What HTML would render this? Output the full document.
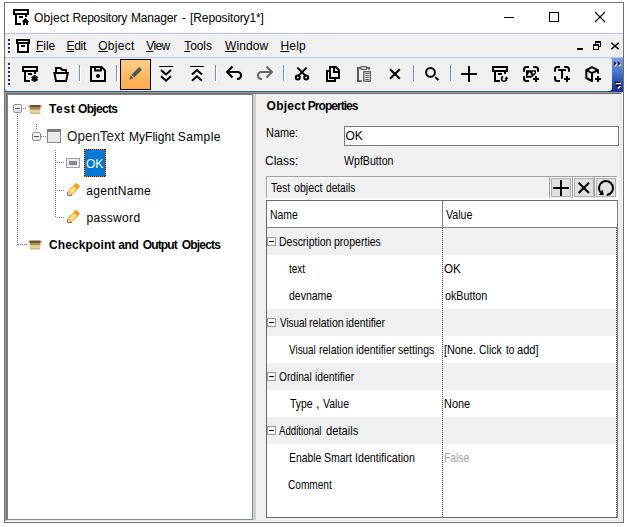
<!DOCTYPE html><html><head><meta charset="utf-8"><title>Object Repository Manager</title><style>
html,body{margin:0;padding:0;background:#fff;width:627px;height:527px;overflow:hidden;font-family:'Liberation Sans',sans-serif;}
.t{position:absolute;white-space:pre;}
svg{position:absolute;left:0;top:0;overflow:visible}
</style></head><body>
<div style="position:absolute;left:4px;top:2px;width:620px;height:521px;background:#fff;box-sizing:border-box;border:1px solid #707070;"></div>
<div style="position:absolute;left:5px;top:33px;width:618px;height:1px;background:#adc8f2;"></div>
<div style="position:absolute;left:5px;top:34px;width:618px;height:23px;background:#f0f0f0;"></div>
<div style="position:absolute;left:5px;top:57px;width:618px;height:1px;background:#adc8f2;"></div>
<div style="position:absolute;left:5px;top:91px;width:618px;height:1px;background:#2f5597;"></div>
<div style="position:absolute;left:608px;top:58px;width:15px;height:34px;background:linear-gradient(#7aa0e8,#4a76d2 40%,#1b3f9e 85%,#12328c);"></div>
<div style="position:absolute;left:5px;top:58px;width:607px;height:33px;background:#fbf9f4;border-radius:0 3px 3px 0;"></div>
<div style="position:absolute;left:5px;top:58px;width:607px;height:32px;background:#f0f0f0;border-radius:0 3px 3px 0;"></div>
<div style="position:absolute;left:5px;top:58px;width:1px;height:1px;background:#9dbdf0;"></div>
<div style="position:absolute;left:5px;top:89px;width:1px;height:2px;background:#8db3f0;"></div>
<div style="position:absolute;left:6px;top:90px;width:1px;height:1px;background:#b9d0f5;"></div>
<div style="position:absolute;left:5px;top:92px;width:618px;height:430px;background:#f0f0f0;"></div>
<div style="position:absolute;left:5px;top:92px;width:617px;height:1px;background:#a0a0a0;"></div>
<div style="position:absolute;left:5px;top:92px;width:1px;height:430px;background:#a0a0a0;"></div>
<div style="position:absolute;left:6px;top:93px;width:615px;height:1px;background:#696969;"></div>
<div style="position:absolute;left:6px;top:93px;width:1px;height:428px;background:#696969;"></div>
<div style="position:absolute;left:622px;top:92px;width:1px;height:430px;background:#ffffff;"></div>
<div style="position:absolute;left:5px;top:521px;width:618px;height:1px;background:#ffffff;"></div>
<div style="position:absolute;left:621px;top:93px;width:1px;height:428px;background:#e3e3e3;"></div>
<div style="position:absolute;left:6px;top:520px;width:616px;height:1px;background:#e3e3e3;"></div>
<div style="position:absolute;left:7px;top:94px;width:246px;height:426px;background:#fff;box-sizing:border-box;border:1px solid #828790;"></div>
<div style="position:absolute;left:253px;top:94px;width:3px;height:426px;background:#d0d0d0;"></div>
<div style="position:absolute;left:9px;top:40px;width:2px;height:2px;background:#ffffff;"></div>
<div style="position:absolute;left:8px;top:39px;width:2px;height:2px;background:#162d80;"></div>
<div style="position:absolute;left:9px;top:44px;width:2px;height:2px;background:#ffffff;"></div>
<div style="position:absolute;left:8px;top:43px;width:2px;height:2px;background:#162d80;"></div>
<div style="position:absolute;left:9px;top:48px;width:2px;height:2px;background:#ffffff;"></div>
<div style="position:absolute;left:8px;top:47px;width:2px;height:2px;background:#162d80;"></div>
<div style="position:absolute;left:9px;top:52px;width:2px;height:2px;background:#ffffff;"></div>
<div style="position:absolute;left:8px;top:51px;width:2px;height:2px;background:#162d80;"></div>
<div style="position:absolute;left:9px;top:64px;width:2px;height:2px;background:#ffffff;"></div>
<div style="position:absolute;left:8px;top:63px;width:2px;height:2px;background:#162d80;"></div>
<div style="position:absolute;left:9px;top:68px;width:2px;height:2px;background:#ffffff;"></div>
<div style="position:absolute;left:8px;top:67px;width:2px;height:2px;background:#162d80;"></div>
<div style="position:absolute;left:9px;top:72px;width:2px;height:2px;background:#ffffff;"></div>
<div style="position:absolute;left:8px;top:71px;width:2px;height:2px;background:#162d80;"></div>
<div style="position:absolute;left:9px;top:76px;width:2px;height:2px;background:#ffffff;"></div>
<div style="position:absolute;left:8px;top:75px;width:2px;height:2px;background:#162d80;"></div>
<div style="position:absolute;left:9px;top:80px;width:2px;height:2px;background:#ffffff;"></div>
<div style="position:absolute;left:8px;top:79px;width:2px;height:2px;background:#162d80;"></div>
<div style="position:absolute;left:9px;top:84px;width:2px;height:2px;background:#ffffff;"></div>
<div style="position:absolute;left:8px;top:83px;width:2px;height:2px;background:#162d80;"></div>
<div style="position:absolute;left:80px;top:66px;width:1px;height:16px;background:#ffffff;"></div>
<div style="position:absolute;left:79px;top:65px;width:1px;height:16px;background:#6a8dd8;"></div>
<div style="position:absolute;left:117px;top:66px;width:1px;height:16px;background:#ffffff;"></div>
<div style="position:absolute;left:116px;top:65px;width:1px;height:16px;background:#6a8dd8;"></div>
<div style="position:absolute;left:216px;top:66px;width:1px;height:16px;background:#ffffff;"></div>
<div style="position:absolute;left:215px;top:65px;width:1px;height:16px;background:#6a8dd8;"></div>
<div style="position:absolute;left:284px;top:66px;width:1px;height:16px;background:#ffffff;"></div>
<div style="position:absolute;left:283px;top:65px;width:1px;height:16px;background:#6a8dd8;"></div>
<div style="position:absolute;left:414px;top:66px;width:1px;height:16px;background:#ffffff;"></div>
<div style="position:absolute;left:413px;top:65px;width:1px;height:16px;background:#6a8dd8;"></div>
<div style="position:absolute;left:451px;top:66px;width:1px;height:16px;background:#ffffff;"></div>
<div style="position:absolute;left:450px;top:65px;width:1px;height:16px;background:#6a8dd8;"></div>
<div style="position:absolute;left:120px;top:59px;width:31px;height:31px;background:linear-gradient(#ffcf8a,#ffb75e 60%,#ffab4c);box-sizing:border-box;border:1px solid #000;"></div>
<div style="position:absolute;left:344px;top:126px;width:275px;height:20px;background:#fff;box-sizing:border-box;border:1px solid #7a7a7a;"></div>
<div style="position:absolute;left:266px;top:176px;width:351px;height:22px;background:#f0f0f0;box-sizing:border-box;border-left:1px solid #a0a0a0;border-top:1px solid #a0a0a0;"></div>
<div style="position:absolute;left:267px;top:177px;width:350px;height:1px;background:#fff;"></div>
<div style="position:absolute;left:267px;top:177px;width:1px;height:21px;background:#fff;"></div>
<div style="position:absolute;left:617px;top:176px;width:1px;height:22px;background:#fff;"></div>
<div style="position:absolute;left:266px;top:198px;width:352px;height:2px;background:#ffffff;"></div>
<div style="position:absolute;left:549px;top:177px;width:1px;height:21px;background:#a0a0a0;"></div>
<div style="position:absolute;left:550px;top:177px;width:1px;height:21px;background:#fff;"></div>
<div style="position:absolute;left:572px;top:177px;width:1px;height:21px;background:#a0a0a0;"></div>
<div style="position:absolute;left:573px;top:177px;width:1px;height:21px;background:#fff;"></div>
<div style="position:absolute;left:594px;top:177px;width:1px;height:21px;background:#a0a0a0;"></div>
<div style="position:absolute;left:595px;top:177px;width:1px;height:21px;background:#fff;"></div>
<div style="position:absolute;left:551px;top:178px;width:20px;height:19px;background:#e1e1e1;box-sizing:border-box;border:1px solid #adadad;"></div>
<div style="position:absolute;left:574px;top:178px;width:20px;height:19px;background:#e1e1e1;box-sizing:border-box;border:1px solid #adadad;"></div>
<div style="position:absolute;left:596px;top:178px;width:20px;height:19px;background:#e1e1e1;box-sizing:border-box;border:1px solid #adadad;"></div>
<div style="position:absolute;left:266px;top:200px;width:352px;height:318px;background:#fff;box-sizing:border-box;border:1px solid #696969;border-right-color:#808080;"></div>
<div style="position:absolute;left:267px;top:227px;width:350px;height:1px;background:#808080;"></div>
<div style="position:absolute;left:442px;top:201px;width:1px;height:26px;background:#808080;"></div>
<div style="position:absolute;left:267px;top:228px;width:350px;height:27px;background:#f0f0f0;"></div>
<div style="position:absolute;left:267px;top:309px;width:350px;height:27px;background:#f0f0f0;"></div>
<div style="position:absolute;left:267px;top:363px;width:350px;height:27px;background:#f0f0f0;"></div>
<div style="position:absolute;left:267px;top:417px;width:350px;height:27px;background:#f0f0f0;"></div>
<div style="position:absolute;left:442px;top:228px;width:1px;height:289px;background:repeating-linear-gradient(#555 0 1px,transparent 1px 2px);"></div>
<div style="position:absolute;left:616px;top:228px;width:1px;height:289px;background:repeating-linear-gradient(#555 0 1px,transparent 1px 2px);"></div>
<div style="position:absolute;left:267px;top:237px;width:9px;height:9px;background:#fff;box-sizing:border-box;border:1px solid #9a9a9a;"></div>
<div style="position:absolute;left:269px;top:241px;width:5px;height:1px;background:#000;"></div>
<div style="position:absolute;left:267px;top:318px;width:9px;height:9px;background:#fff;box-sizing:border-box;border:1px solid #9a9a9a;"></div>
<div style="position:absolute;left:269px;top:322px;width:5px;height:1px;background:#000;"></div>
<div style="position:absolute;left:267px;top:372px;width:9px;height:9px;background:#fff;box-sizing:border-box;border:1px solid #9a9a9a;"></div>
<div style="position:absolute;left:269px;top:376px;width:5px;height:1px;background:#000;"></div>
<div style="position:absolute;left:267px;top:426px;width:9px;height:9px;background:#fff;box-sizing:border-box;border:1px solid #9a9a9a;"></div>
<div style="position:absolute;left:269px;top:430px;width:5px;height:1px;background:#000;"></div>
<div style="position:absolute;left:84px;top:149px;width:22px;height:28px;background:#0078d7;"></div>
<div style="position:absolute;left:84px;top:149px;width:22px;height:1px;background:repeating-linear-gradient(90deg,#140c00 0 1px,#ff8a26 1px 2px);"></div>
<div style="position:absolute;left:84px;top:176px;width:22px;height:1px;background:repeating-linear-gradient(90deg,#140c00 0 1px,#ff8a26 1px 2px);"></div>
<div style="position:absolute;left:84px;top:149px;width:1px;height:28px;background:repeating-linear-gradient(180deg,#140c00 0 1px,#ff8a26 1px 2px);"></div>
<div style="position:absolute;left:105px;top:149px;width:1px;height:28px;background:repeating-linear-gradient(180deg,#140c00 0 1px,#ff8a26 1px 2px);"></div>
<svg width="627" height="527" viewBox="0 0 627 527">
<path d="M23 108.5H27" stroke="#808080" stroke-width="1" stroke-dasharray="1 1" fill="none"/>
<path d="M17.5 114V245" stroke="#808080" stroke-width="1" stroke-dasharray="1 1" fill="none"/>
<path d="M18 244.5H27" stroke="#808080" stroke-width="1" stroke-dasharray="1 1" fill="none"/>
<path d="M36.5 124V130" stroke="#808080" stroke-width="1" stroke-dasharray="1 1" fill="none"/>
<path d="M41 136.5H47" stroke="#808080" stroke-width="1" stroke-dasharray="1 1" fill="none"/>
<path d="M55.5 150V218" stroke="#808080" stroke-width="1" stroke-dasharray="1 1" fill="none"/>
<path d="M57 162.5H65" stroke="#808080" stroke-width="1" stroke-dasharray="1 1" fill="none"/>
<path d="M57 190.5H65" stroke="#808080" stroke-width="1" stroke-dasharray="1 1" fill="none"/>
<path d="M57 217.5H65" stroke="#808080" stroke-width="1" stroke-dasharray="1 1" fill="none"/>
<defs><linearGradient id="eg" x1="0" y1="0" x2="0" y2="1"><stop offset="0" stop-color="#fff"/><stop offset="0.55" stop-color="#f4f4f4"/><stop offset="1" stop-color="#d8d8d8"/></linearGradient>
<linearGradient id="bx" x1="0" y1="0" x2="0" y2="1"><stop offset="0" stop-color="#d9c285"/><stop offset="0.45" stop-color="#ecdca0"/><stop offset="1" stop-color="#c4a86c"/></linearGradient></defs>
<rect x="13.5" y="104.5" width="8" height="8" rx="1.5" fill="url(#eg)" stroke="#919191"/>
<rect x="15" y="108" width="5" height="1" fill="#3a4db5"/>
<rect x="32.5" y="132.5" width="8" height="8" rx="1.5" fill="url(#eg)" stroke="#919191"/>
<rect x="34" y="136" width="5" height="1" fill="#3a4db5"/>
<g transform="translate(28,104.5)">
<path d="M-0.2 1.4L2 0.5V3.1L0.6 2.8ZM14.5 1.4L12.2 0.5V3.1L13.7 2.8Z" fill="#c9aa70"/><path d="M0.4 0.2L1.6 1M13.8 0.2L12.6 1M0.6 3.6L1.6 3M13.6 3.6L12.6 3" stroke="#e3d2a6" stroke-width="0.7"/>
<rect x="1.9" y="0.5" width="10.4" height="2.7" fill="#6f4f25"/>
<rect x="1.9" y="3.2" width="10.4" height="2.1" fill="#a8844e"/>
<rect x="1.9" y="5.3" width="10.4" height="4.1" fill="url(#bx)"/>
<path d="M0.6 4.6L1.9 4V5.2ZM13.6 4.6L12.3 4V5.2Z" fill="#d9c089"/>
</g>
<g transform="translate(28,240)">
<path d="M-0.2 1.4L2 0.5V3.1L0.6 2.8ZM14.5 1.4L12.2 0.5V3.1L13.7 2.8Z" fill="#c9aa70"/><path d="M0.4 0.2L1.6 1M13.8 0.2L12.6 1M0.6 3.6L1.6 3M13.6 3.6L12.6 3" stroke="#e3d2a6" stroke-width="0.7"/>
<rect x="1.9" y="0.5" width="10.4" height="2.7" fill="#6f4f25"/>
<rect x="1.9" y="3.2" width="10.4" height="2.1" fill="#a8844e"/>
<rect x="1.9" y="5.3" width="10.4" height="4.1" fill="url(#bx)"/>
<path d="M0.6 4.6L1.9 4V5.2ZM13.6 4.6L12.3 4V5.2Z" fill="#d9c089"/>
</g>
<rect x="47.5" y="129.5" width="13" height="13" fill="#e9e9ee" stroke="#848488"/>
<rect x="47" y="129" width="14" height="3" fill="#7c7c80"/>
<rect x="56" y="130" width="1" height="1" fill="#ff5a4a"/><rect x="58" y="130" width="1" height="1" fill="#35d04a"/>
<rect x="66.5" y="158.5" width="13" height="9" fill="#ebebef" stroke="#a2a2a8"/>
<rect x="69" y="161" width="8" height="4" fill="#8a8a90"/>
<g transform="translate(67,183)">
<path d="M1 9.2L4.9 12.5H1Z" fill="#cfd0d8"/><path d="M0.5 9V12.5H5" fill="none" stroke="#7e7e88" stroke-width="1"/>
<g transform="translate(2.5,10.2) rotate(-45)"><rect x="0" y="-2.7" width="12.2" height="5.6" rx="0.8" fill="#ff9a0a"/><rect x="0.9" y="-1.7" width="7.6" height="3.6" fill="#ffec94"/><path d="M0.9 0.1H8.5" stroke="#ffb43a" stroke-width="0.9" stroke-dasharray="1 1"/></g>
</g>
<g transform="translate(67,210)">
<path d="M1 9.2L4.9 12.5H1Z" fill="#cfd0d8"/><path d="M0.5 9V12.5H5" fill="none" stroke="#7e7e88" stroke-width="1"/>
<g transform="translate(2.5,10.2) rotate(-45)"><rect x="0" y="-2.7" width="12.2" height="5.6" rx="0.8" fill="#ff9a0a"/><rect x="0.9" y="-1.7" width="7.6" height="3.6" fill="#ffec94"/><path d="M0.9 0.1H8.5" stroke="#ffb43a" stroke-width="0.9" stroke-dasharray="1 1"/></g>
</g>
<g transform="translate(13,9)" fill="#000">
<path fill-rule="evenodd" d="M0 0H16V6H0Z M2 2V4H14V2Z"/>
<path d="M2 6H4V14H8V16H2Z"/><rect x="6" y="7" width="4" height="2"/><rect x="12" y="6" width="2" height="2"/>
<path d="M12.5 8.8L16.3 12.7H15V16H13.1V14H11.9V16H10V12.7H8.7Z"/>
</g>
<rect x="504" y="17" width="10" height="1" fill="#000"/>
<rect x="549.5" y="12.5" width="9" height="9" fill="none" stroke="#000"/>
<path d="M595 12L605 22M605 12L595 22" stroke="#000" stroke-width="1.1" fill="none"/>
<rect x="15" y="38" width="16" height="16" fill="#fff" opacity="0.8"/>
<g transform="translate(16,39)" fill="#000"><path fill-rule="evenodd" d="M0 0H14V5H0Z M2 2V3H12V2Z"/><path fill-rule="evenodd" d="M1 5H13V14H1Z M3 5V12H11V5Z"/><rect x="5" y="6" width="4" height="2"/></g>
<rect x="577" y="48" width="6" height="2" fill="#000"/>
<path fill-rule="evenodd" d="M595 41H601V47H599V50H593V44H595Z M596 43V44H599V46H600V43Z M594 46V49H598V46Z" fill="#000"/>
<path d="M611.3 42.8L618.7 49.2M618.7 42.8L611.3 49.2" stroke="#000" stroke-width="1.5" fill="none"/>
<g transform="translate(22,66)" fill="#000">
<path fill-rule="evenodd" d="M0 0H16V6H0Z M2 2V4H14V2Z"/>
<path d="M2 6H4V14H8V16H2Z"/><rect x="6" y="7" width="4" height="2"/><rect x="12" y="6" width="2" height="2"/>
<path d="M12.6 9.1V16.1M9.6 10.85L15.6 14.35M15.6 10.85L9.6 14.35" stroke="#000" stroke-width="2.1" fill="none"/>
</g>
<path d="M56 72.5V68H60.5L62.3 70H66V72.5" fill="none" stroke="#000" stroke-width="2" stroke-linejoin="miter"/><path d="M54.4 73H67.8L66.1 81H56Z" fill="none" stroke="#000" stroke-width="2"/>
<path d="M91 67H101.6L105 70.4V81H91Z" fill="none" stroke="#000" stroke-width="2"/><path d="M95 67V70.5H101V67" fill="none" stroke="#000" stroke-width="2"/><circle cx="98" cy="76" r="2" fill="#000"/>
<g transform="translate(129.2,79.7) rotate(-45)" fill="#50545c"><path d="M0 0L4.1 -1.9V1.9Z"/><rect x="5.2" y="-1.95" width="10.8" height="3.9"/></g>
<rect x="159" y="66" width="14" height="1" fill="#000"/>
<path d="M161 70L166 74.5L171 70M161 76.2L166 80.7L171 76.2" fill="none" stroke="#000" stroke-width="2" stroke-width="1.9"/>
<rect x="190" y="66" width="14" height="1" fill="#000"/>
<path d="M192 74.6L197 70.1L202 74.6M192 80.8L197 76.3L202 80.8" fill="none" stroke="#000" stroke-width="2" stroke-width="1.9"/>
<g transform="translate(226,66)" fill="none" stroke="#000" stroke-width="2.1"><path d="M6.5 0.6L1.1 6L6.5 11.4"/><path d="M1.6 6H11.6A3.5 3.5 0 0 1 11.6 13H11"/></g>
<g transform="translate(273,66) scale(-1,1)" fill="none" stroke="#686868" stroke-width="2.1"><path d="M6.5 0.6L1.1 6L6.5 11.4"/><path d="M1.6 6H11.6A3.5 3.5 0 0 1 11.6 13H11"/></g>
<path d="M297.3 67.6L306.3 76.4M306.7 67.6L297.7 76.4" fill="none" stroke="#000" stroke-width="2"/><circle cx="297.8" cy="77.6" r="2" fill="none" stroke="#000" stroke-width="2" stroke-width="1.8"/><circle cx="306.2" cy="77.6" r="2" fill="none" stroke="#000" stroke-width="2" stroke-width="1.8"/>
<path d="M330 67H335.8L339 70.2V78H330Z" fill="none" stroke="#000" stroke-width="2"/><path d="M333 68H335V71H338V73H333Z" fill="#000"/><path d="M329 71H327V81H335V79" fill="none" stroke="#000" stroke-width="2"/>
<g fill="#585858"><rect x="357" y="67" width="2" height="15"/><rect x="357" y="67" width="3.6" height="1.7"/><rect x="357" y="80.2" width="4.8" height="1.8"/><rect x="367" y="67" width="3" height="1.7"/><rect x="368.2" y="67" width="1.8" height="2.7"/></g>
<rect x="360.7" y="66.7" width="6" height="2.6" rx="1" fill="#f4f4f4" stroke="#585858" stroke-width="1.3"/>
<rect x="363.8" y="71.7" width="6.5" height="9.5" fill="#f4f4f4" stroke="#585858" stroke-width="1.3"/>
<path d="M365.3 73.5H368.8M365.3 75.5H368.8M365.3 77.5H368.8M365.3 79.5H368.8" stroke="#585858" stroke-width="1" fill="none"/>
<path d="M390 69.2L399.8 78.8M399.8 69.2L390 78.8" fill="none" stroke="#000" stroke-width="2"/>
<circle cx="430.5" cy="72.4" r="4.4" fill="none" stroke="#000" stroke-width="2" stroke-width="2.2"/><path d="M435.3 77.3L438.5 80.1" fill="none" stroke="#000" stroke-width="2" stroke-width="1.9"/>
<rect x="461" y="73" width="16" height="2" fill="#000"/><rect x="468" y="66" width="2" height="16" fill="#000"/>
<g transform="translate(492,66)" fill="#000">
<path fill-rule="evenodd" d="M0 0H16V6H0Z M2 2V4H14V2Z"/>
<path d="M2 6H4V14H8V16H2Z"/><rect x="6" y="7" width="4" height="2"/><rect x="12" y="6" width="2" height="2"/>
<path d="M11.2 10.6A2.35 2.35 0 1 0 14.3 12.9" fill="none" stroke="#000" stroke-width="1.6"/><path d="M12.5 12.9H16.4L14.5 10.3Z"/>
</g>
<path d="M524 71.7V69.5A2.5 2.5 0 0 1 526.5 67H529 M533.2 67H535.5A2.5 2.5 0 0 1 538 69.5V71.7 M524 76.3V78.5A2.5 2.5 0 0 0 526.5 81H529" fill="none" stroke="#000" stroke-width="2"/>
<rect x="533" y="78" width="6" height="2" fill="#000"/><rect x="535" y="76" width="2" height="6" fill="#000"/>
<path fill-rule="evenodd" d="M526 70.2H536V73.4L531.4 77.7H526Z M527.2 75.8H532L529.6 72Z M534.7 72.6A1.2 1.2 0 1 0 534.7 72.61Z" fill="#000"/>
<path d="M555 71.7V69.5A2.5 2.5 0 0 1 557.5 67H560 M564.2 67H566.5A2.5 2.5 0 0 1 569 69.5V71.7 M555 76.3V78.5A2.5 2.5 0 0 0 557.5 81H560" fill="none" stroke="#000" stroke-width="2"/>
<rect x="564" y="78" width="6" height="2" fill="#000"/><rect x="566" y="76" width="2" height="6" fill="#000"/>
<rect x="558" y="69" width="8" height="2" fill="#000"/><rect x="561" y="69" width="2" height="9.7" fill="#000"/>
<path d="M598 73.6V70.1L592 67.1L586.3 70.1V78L592 81M586.3 70.1L592 73.1L598 70.1M592 73.1V81.8" fill="none" stroke="#000" stroke-width="2" stroke-width="2" stroke-linejoin="round"/>
<rect x="595" y="78" width="6" height="2" fill="#000"/><rect x="597" y="76" width="2" height="6" fill="#000"/>
<path d="M615 63L616.5 64.5L615 66M619 63L620.5 64.5L619 66" stroke="#fff" stroke-width="1.3" fill="none"/>
<path d="M614 62L615.5 63.5L614 65M618 62L619.5 63.5L618 65" stroke="#000" stroke-width="1.3" fill="none"/>
<rect x="616" y="83" width="5" height="1" fill="#fff"/><path d="M616 86H621L618.5 89Z" fill="#fff"/>
<rect x="615" y="82" width="5" height="1" fill="#000"/><path d="M615 85H620L617.5 88Z" fill="#000"/>
<rect x="553" y="187" width="16" height="2" fill="#000"/><rect x="560" y="180" width="2" height="16" fill="#000"/>
<path d="M578.6 182.8L589 193M589 182.8L578.6 193" stroke="#000" stroke-width="2" fill="none"/>
<path d="M606.8 195A7 7 0 1 0 600.7 192.6" fill="none" stroke="#000" stroke-width="2"/><path d="M599 194.9H603.9L602.5 189.5Z" fill="#000"/>
</svg>
<span class="t" style="left:34.0px;top:12px;font-size:12px;line-height:12px;font-weight:400;color:#000000;letter-spacing:0.08px;">Object</span>
<span class="t" style="left:72.4px;top:12px;font-size:12px;line-height:12px;font-weight:400;color:#000000;letter-spacing:-0.27px;">Repository</span>
<span class="t" style="left:130.9px;top:12px;font-size:12px;line-height:12px;font-weight:400;color:#000000;letter-spacing:-0.15px;">Manager</span>
<span class="t" style="left:181.9px;top:12px;font-size:12px;line-height:12px;font-weight:400;color:#000000;">-</span>
<span class="t" style="left:190.1px;top:12px;font-size:12px;line-height:12px;font-weight:400;color:#000000;letter-spacing:-0.12px;">[Repository1*]</span>
<span class="t" style="left:36.0px;top:40px;font-size:12px;line-height:12px;font-weight:400;color:#000000;letter-spacing:-0.03px;"><span style="text-decoration:underline;text-underline-offset:1px;text-decoration-thickness:1px">F</span>ile</span>
<span class="t" style="left:66.5px;top:40px;font-size:12px;line-height:12px;font-weight:400;color:#000000;letter-spacing:-0.3px;"><span style="text-decoration:underline;text-underline-offset:1px;text-decoration-thickness:1px">E</span>dit</span>
<span class="t" style="left:98.2px;top:40px;font-size:12px;line-height:12px;font-weight:400;color:#000000;letter-spacing:0.28px;"><span style="text-decoration:underline;text-underline-offset:1px;text-decoration-thickness:1px">O</span>bject</span>
<span class="t" style="left:146.2px;top:40px;font-size:12px;line-height:12px;font-weight:400;color:#000000;letter-spacing:-0.6px;"><span style="text-decoration:underline;text-underline-offset:1px;text-decoration-thickness:1px">V</span>iew</span>
<span class="t" style="left:184.3px;top:40px;font-size:12px;line-height:12px;font-weight:400;color:#000000;letter-spacing:-0.1px;"><span style="text-decoration:underline;text-underline-offset:1px;text-decoration-thickness:1px">T</span>ools</span>
<span class="t" style="left:225.1px;top:40px;font-size:12px;line-height:12px;font-weight:400;color:#000000;letter-spacing:0.06px;"><span style="text-decoration:underline;text-underline-offset:1px;text-decoration-thickness:1px">W</span>indow</span>
<span class="t" style="left:280.4px;top:40px;font-size:12px;line-height:12px;font-weight:400;color:#000000;letter-spacing:0.23px;"><span style="text-decoration:underline;text-underline-offset:1px;text-decoration-thickness:1px">H</span>elp</span>
<span class="t" style="left:48.9px;top:103px;font-size:12px;line-height:12px;font-weight:700;color:#000000;letter-spacing:0.73px;">Test</span>
<span class="t" style="left:78.1px;top:103px;font-size:12px;line-height:12px;font-weight:700;color:#000000;letter-spacing:-0.7px;">Objects</span>
<span class="t" style="left:67.3px;top:128.8px;font-size:14px;line-height:14px;font-weight:400;color:#262626;transform-origin:0 0;transform:scaleX(0.959);">OpenText</span>
<span class="t" style="left:128.9px;top:131px;font-size:12px;line-height:12px;font-weight:400;color:#000000;letter-spacing:0.06px;">MyFlight</span>
<span class="t" style="left:177.8px;top:131px;font-size:12px;line-height:12px;font-weight:400;color:#000000;letter-spacing:0.38px;">Sample</span>
<span class="t" style="left:85.9px;top:158px;font-size:12px;line-height:12px;font-weight:400;color:#ffffff;">OK</span>
<span class="t" style="left:86.3px;top:185px;font-size:12px;line-height:12px;font-weight:400;color:#000000;letter-spacing:0.28px;">agentName</span>
<span class="t" style="left:86.4px;top:212px;font-size:12px;line-height:12px;font-weight:400;color:#000000;letter-spacing:0.34px;">password</span>
<span class="t" style="left:49.0px;top:239px;font-size:12px;line-height:12px;font-weight:700;color:#000000;letter-spacing:0.11px;">Checkpoint</span>
<span class="t" style="left:118.2px;top:239px;font-size:12px;line-height:12px;font-weight:700;color:#000000;letter-spacing:-0.4px;">and</span>
<span class="t" style="left:142.7px;top:239px;font-size:12px;line-height:12px;font-weight:700;color:#000000;letter-spacing:-0.86px;">Output</span>
<span class="t" style="left:181.8px;top:239px;font-size:12px;line-height:12px;font-weight:700;color:#000000;letter-spacing:-0.83px;">Objects</span>
<span class="t" style="left:266.6px;top:100px;font-size:12px;line-height:12px;font-weight:700;color:#000000;letter-spacing:0.24px;">Object</span>
<span class="t" style="left:307.8px;top:100px;font-size:12px;line-height:12px;font-weight:700;color:#000000;letter-spacing:-0.96px;">Properties</span>
<span class="t" style="left:265.9px;top:125.6px;font-size:13px;line-height:13px;font-weight:400;color:#000000;transform-origin:0 0;transform:scaleX(0.839);">Name:</span>
<span class="t" style="left:345.4px;top:130px;font-size:12px;line-height:12px;font-weight:400;color:#000000;">OK</span>
<span class="t" style="left:265.4px;top:153.8px;font-size:13px;line-height:13px;font-weight:400;color:#000000;transform-origin:0 0;transform:scaleX(0.921);">Class:</span>
<span class="t" style="left:343.9px;top:153.8px;font-size:13px;line-height:13px;font-weight:400;color:#000000;transform-origin:0 0;transform:scaleX(0.815);">WpfButton</span>
<span class="t" style="left:270.7px;top:181.0px;font-size:13px;line-height:13px;font-weight:400;color:#000000;transform-origin:0 0;transform:scaleX(0.808);">Test</span>
<span class="t" style="left:293.9px;top:181.0px;font-size:13px;line-height:13px;font-weight:400;color:#000000;transform-origin:0 0;transform:scaleX(0.821);">object</span>
<span class="t" style="left:326.1px;top:181.0px;font-size:13px;line-height:13px;font-weight:400;color:#000000;transform-origin:0 0;transform:scaleX(0.779);">details</span>
<span class="t" style="left:270.0px;top:208.0px;font-size:13px;line-height:13px;font-weight:400;color:#000000;transform-origin:0 0;transform:scaleX(0.8);">Name</span>
<span class="t" style="left:446.2px;top:208.0px;font-size:13px;line-height:13px;font-weight:400;color:#000000;transform-origin:0 0;transform:scaleX(0.819);">Value</span>
<span class="t" style="left:278.7px;top:235.0px;font-size:13px;line-height:13px;font-weight:400;color:#000000;transform-origin:0 0;transform:scaleX(0.806);">Description</span>
<span class="t" style="left:334.1px;top:235.0px;font-size:13px;line-height:13px;font-weight:400;color:#000000;transform-origin:0 0;transform:scaleX(0.811);">properties</span>
<span class="t" style="left:288.8px;top:262.0px;font-size:13px;line-height:13px;font-weight:400;color:#000000;transform-origin:0 0;transform:scaleX(0.771);">text</span>
<span class="t" style="left:444.0px;top:262.0px;font-size:13px;line-height:13px;font-weight:400;color:#000000;transform-origin:0 0;transform:scaleX(0.9);">OK</span>
<span class="t" style="left:288.9px;top:289.0px;font-size:13px;line-height:13px;font-weight:400;color:#000000;transform-origin:0 0;transform:scaleX(0.807);">devname</span>
<span class="t" style="left:444.9px;top:289.0px;font-size:13px;line-height:13px;font-weight:400;color:#000000;transform-origin:0 0;transform:scaleX(0.824);">okButton</span>
<span class="t" style="left:280.0px;top:316.0px;font-size:13px;line-height:13px;font-weight:400;color:#000000;transform-origin:0 0;transform:scaleX(0.759);">Visual</span>
<span class="t" style="left:308.8px;top:316.0px;font-size:13px;line-height:13px;font-weight:400;color:#000000;transform-origin:0 0;transform:scaleX(0.812);">relation</span>
<span class="t" style="left:346.1px;top:316.0px;font-size:13px;line-height:13px;font-weight:400;color:#000000;transform-origin:0 0;transform:scaleX(0.794);">identifier</span>
<span class="t" style="left:289.4px;top:343.0px;font-size:13px;line-height:13px;font-weight:400;color:#000000;transform-origin:0 0;transform:scaleX(0.762);">Visual</span>
<span class="t" style="left:318.7px;top:343.0px;font-size:13px;line-height:13px;font-weight:400;color:#000000;transform-origin:0 0;transform:scaleX(0.805);">relation</span>
<span class="t" style="left:355.8px;top:343.0px;font-size:13px;line-height:13px;font-weight:400;color:#000000;transform-origin:0 0;transform:scaleX(0.796);">identifier</span>
<span class="t" style="left:397.8px;top:343.0px;font-size:13px;line-height:13px;font-weight:400;color:#000000;transform-origin:0 0;transform:scaleX(0.809);">settings</span>
<span class="t" style="left:444.4px;top:343.0px;font-size:13px;line-height:13px;font-weight:400;color:#000000;transform-origin:0 0;transform:scaleX(0.833);">[None.</span>
<span class="t" style="left:478.7px;top:343.0px;font-size:13px;line-height:13px;font-weight:400;color:#000000;transform-origin:0 0;transform:scaleX(0.807);">Click</span>
<span class="t" style="left:505.9px;top:343.0px;font-size:13px;line-height:13px;font-weight:400;color:#000000;transform-origin:0 0;transform:scaleX(0.77);">to</span>
<span class="t" style="left:517.4px;top:343.0px;font-size:13px;line-height:13px;font-weight:400;color:#000000;transform-origin:0 0;transform:scaleX(0.854);">add]</span>
<span class="t" style="left:279.4px;top:370.0px;font-size:13px;line-height:13px;font-weight:400;color:#000000;transform-origin:0 0;transform:scaleX(0.78);">Ordinal</span>
<span class="t" style="left:314.5px;top:370.0px;font-size:13px;line-height:13px;font-weight:400;color:#000000;transform-origin:0 0;transform:scaleX(0.796);">identifier</span>
<span class="t" style="left:289.7px;top:397.0px;font-size:13px;line-height:13px;font-weight:400;color:#000000;transform-origin:0 0;transform:scaleX(0.8);">Type</span>
<span class="t" style="left:316.1px;top:397px;font-size:13px;line-height:13px;font-weight:400;color:#000000;">,</span>
<span class="t" style="left:322.5px;top:397.0px;font-size:13px;line-height:13px;font-weight:400;color:#000000;transform-origin:0 0;transform:scaleX(0.806);">Value</span>
<span class="t" style="left:444.2px;top:397.0px;font-size:13px;line-height:13px;font-weight:400;color:#000000;transform-origin:0 0;transform:scaleX(0.841);">None</span>
<span class="t" style="left:279.3px;top:424.0px;font-size:13px;line-height:13px;font-weight:400;color:#000000;transform-origin:0 0;transform:scaleX(0.743);">Additional</span>
<span class="t" style="left:325.5px;top:424.0px;font-size:13px;line-height:13px;font-weight:400;color:#000000;transform-origin:0 0;transform:scaleX(0.857);">details</span>
<span class="t" style="left:288.5px;top:451.0px;font-size:13px;line-height:13px;font-weight:400;color:#000000;transform-origin:0 0;transform:scaleX(0.795);">Enable</span>
<span class="t" style="left:323.8px;top:451.0px;font-size:13px;line-height:13px;font-weight:400;color:#000000;transform-origin:0 0;transform:scaleX(0.806);">Smart</span>
<span class="t" style="left:354.8px;top:451.0px;font-size:13px;line-height:13px;font-weight:400;color:#000000;transform-origin:0 0;transform:scaleX(0.821);">Identification</span>
<span class="t" style="left:444.3px;top:451.0px;font-size:13px;line-height:13px;font-weight:400;color:#a0a0a0;transform-origin:0 0;transform:scaleX(0.793);">False</span>
<span class="t" style="left:288.1px;top:478.0px;font-size:13px;line-height:13px;font-weight:400;color:#000000;transform-origin:0 0;transform:scaleX(0.776);">Comment</span>
</body></html>
